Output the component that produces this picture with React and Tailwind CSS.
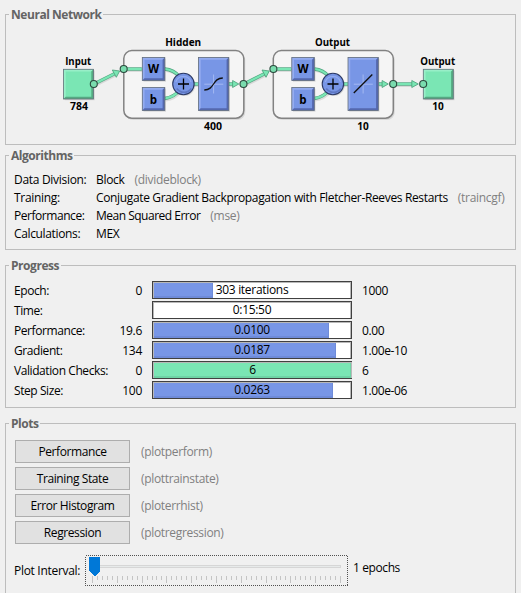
import React from 'react';

function Panel({ title, titleClass = '', className = '', children }) {
  return (
    <section className={`w-[511px] shrink-0 border border-[#bdbdbd] ${className}`}>
      <h2 className={`-mt-[9px] ml-[3px] h-[18px] whitespace-nowrap bg-[#f0f0f0] pl-[2px] text-[12px] font-bold leading-[18px] tracking-[-0.45px] text-[#646464] ${titleClass}`}>
        {title}
      </h2>
      {children}
    </section>
  );
}

function Bevel({ x, y, w, h, fill, light, dark }) {
  const b = 2.2;
  return (
    <g>
      <rect x={x + 1.2} y={y + 1.2} width={w} height={h} fill="#000" opacity="0.12" />
      <rect x={x} y={y} width={w} height={h} fill={fill} />
      <path d={`M${x} ${y}h${w}l${-b} ${b}h${2 * b - w}v${h - 2 * b}l${-b} ${b}z`} fill={light} />
      <path d={`M${x + w} ${y + h}h${-w}l${b} ${-b}h${w - 2 * b}v${2 * b - h}l${b} ${-b}z`} fill={dark} />
      <rect x={x} y={y} width={w} height={h} fill="none" stroke="#66707c" strokeWidth="0.8" />
    </g>
  );
}

const GREEN = { fill: '#7ae6b4', light: '#98efc8', dark: '#55a982' };
const BLUE = { fill: '#7896e6', light: '#94acf0', dark: '#5468ae' };

function Label({ x, y, w, children }) {
  return (
    <text x={x - w / 2} y={y} textLength={w} lengthAdjust="spacingAndGlyphs" fontSize="11" fontWeight="700" fill="#000">
      {children}
    </text>
  );
}

function Link({ d }) {
  return (
    <g fill="none">
      <path d={d} stroke="#000" strokeOpacity="0.1" strokeWidth="3" transform="translate(1 1.5)" />
      <path d={d} stroke="#4fa37e" strokeWidth="3.4" />
      <path d={d} stroke="#7ae6b4" strokeWidth="2.2" />
    </g>
  );
}

function Dot({ x, y }) {
  return <circle cx={x} cy={y} r="3.5" fill="#7adcae" stroke="#2c4a3e" strokeWidth="1.1" />;
}

function Head({ points }) {
  return <polygon points={points} fill="#7ae6b4" stroke="#4a9c77" strokeWidth="0.8" />;
}

function Layer({ x, curve }) {
  return (
    <g transform={`translate(${x} 0)`}>
      <rect x="1.5" y="52" width="120" height="68" rx="8" fill="#000" opacity="0.1" />
      <rect x="0" y="50.6" width="120" height="67.6" rx="8" fill="#f5f5f5" stroke="#828282" strokeWidth="1.5" />
      <Link d="M0 69H18" />
      <Link d="M41 69C48 69.5 52 72 56 77" />
      <Link d="M41 98.5C48 97.5 52 95 56 90" />
      <Link d="M68 84H76" />
      <Link d="M105 84H110" />
      <Bevel x={18.5} y={57.5} w={22.5} h={23} {...BLUE} />
      <Bevel x={18.5} y={87.5} w={22.5} h={23} {...BLUE} />
      <text x="29.7" y="73.3" textAnchor="middle" fontSize="11.5" fontWeight="700">W</text>
      <text x="29.7" y="103.5" textAnchor="middle" fontSize="11.5" fontWeight="700">b</text>
      <circle cx="60.6" cy="85" r="11" fill="#000" opacity="0.12" />
      <circle cx="59.6" cy="84" r="10.7" fill="#7896e6" stroke="#2d3a66" strokeWidth="1.1" />
      <path d="M52 82a8 8 0 0 1 15.2 0" fill="none" stroke="#94acf0" strokeWidth="1.2" />
      <path d="M53 88.5a8.8 8.8 0 0 0 14.5 0" fill="none" stroke="#5f78c4" strokeWidth="1.6" />
      <path d="M54.2 84H65.2M59.7 78.5V89.5" stroke="#000" strokeWidth="1.3" />
      <Bevel x={74.7} y={57.5} w={30.3} h={53} {...BLUE} />
      <path d="M80.5 84.2H99.5M89.8 74.5V93.5" stroke="#a9bcf3" strokeWidth="0.9" />
      <path d={curve} fill="none" stroke="#101010" strokeWidth="1.3" />
      <Head points="108.8,80.5 108.8,87.5 115,84" />
    </g>
  );
}

function Diagram() {
  return (
    <svg className="-mt-[9px] -ml-[5px] block h-[125px] w-[515px] font-['Open_Sans','Noto_Sans',sans-serif] tracking-normal" viewBox="1 15 515 125">
      <Layer x={123.8} curve="M80.5 90C91 90 88.5 78 99 78" />
      <Layer x={273.3} curve="M80.5 93L99 74.5" />
      <Link d="M94 84L115 73.5" />
      <Link d="M244 84L265 73.5" />
      <Link d="M393 84H412" />
      <Head points="112.3,70 119.7,71 116.3,77.3" />
      <Head points="262,70 269.3,71 266,77.3" />
      <Head points="411.8,80.5 411.8,87.5 418.3,84" />
      <Bevel x={63.5} y={69.3} w={30} h={29.7} {...GREEN} />
      <Bevel x={423.3} y={69.3} w={30} h={29.7} {...GREEN} />
      <Dot x={93.8} y={84} />
      <Dot x={123.7} y={69} />
      <Dot x={243.5} y={84} />
      <Dot x={273.4} y={69} />
      <Dot x={393.2} y={84} />
      <Dot x={423.2} y={84} />
      <Label x={78.2} y={65} w={26}>Input</Label>
      <Label x={79} y={110.3} w={18}>784</Label>
      <Label x={183.2} y={45.5} w={36}>Hidden</Label>
      <Label x={213} y={130.3} w={18}>400</Label>
      <Label x={332.5} y={45.5} w={35}>Output</Label>
      <Label x={363} y={130.3} w={11.5}>10</Label>
      <Label x={437.7} y={65} w={35}>Output</Label>
      <Label x={438} y={110.3} w={11.5}>10</Label>
    </svg>
  );
}

const algorithms = [
  ['Data Division:', 'Block', '(divideblock)', 'tracking-[-0.3px]', ''],
  ['Training:', 'Conjugate Gradient Backpropagation with Fletcher-Reeves Restarts', '(traincgf)', 'tracking-[-0.3px]', 'tracking-[-0.35px]'],
  ['Performance:', 'Mean Squared Error', '(mse)', 'tracking-[-0.45px]', 'tracking-[-0.5px]'],
  ['Calculations:', 'MEX', '', 'tracking-[-0.35px]', ''],
];

const progress = [
  ['Epoch:', '0', '303 iterations', '1000', 'w-[59px]'],
  ['Time:', '', '0:15:50', '', 'w-0'],
  ['Performance:', '19.6', '0.0100', '0.00', 'w-[175px]'],
  ['Gradient:', '134', '0.0187', '1.00e-10', 'w-[182px]'],
  ['Validation Checks:', '0', '6', '6', 'w-[197px]'],
  ['Step Size:', '100', '0.0263', '1.00e-06', 'w-[179px]'],
];

function Bar({ text, fill, green }) {
  return (
    <div className="grid h-[18px] w-[200px] shrink-0 border border-[#404040] bg-white">
      <div className="col-start-1 row-start-1 flex h-4 border-t border-l border-r border-[#b8b8b8]">
        <div className={`${fill} ${fill === 'w-0' ? '' : 'border-r border-b-2'} ${green ? 'border-[#6fd3a5] bg-[#7ae6b4]' : 'border-[#6f8bd8] bg-[#7896e6]'}`} />
      </div>
      <div className="col-start-1 row-start-1 h-4 text-center leading-[16px]">{text}</div>
    </div>
  );
}

const plots = [
  ['Performance', '(plotperform)'],
  ['Training State', '(plottrainstate)'],
  ['Error Histogram', '(ploterrhist)'],
  ['Regression', '(plotregression)'],
];

function Slider() {
  const ticks = Array.from({ length: 51 }, (_, i) => i);
  return (
    <svg className="block h-[31px] w-[263px] shrink-0" viewBox="85 555 263 31" shapeRendering="crispEdges">
      <rect x="85.5" y="555.5" width="262" height="30" fill="none" stroke="#505050" strokeDasharray="1 1" />
      <rect x="89.5" y="565.5" width="251" height="2" fill="#e7eaea" stroke="#d6d6d6" />
      {ticks.map((i) => (
        <rect key={i} x={Math.round(92 + i * 4.96)} y="576" width="1" height={i % 5 === 0 ? 7 : 4} fill="#c4c4c4" />
      ))}
      <path d="M89 557H100V571L95 576H94L89 571Z" fill="#0078d7" />
    </svg>
  );
}

export default function App() {
  return (
    <main className="flex h-[593px] w-[521px] flex-col overflow-hidden bg-[#f0f0f0] pt-[14px] pl-[5px] font-['Open_Sans','Noto_Sans',sans-serif] text-[12px] tracking-[-0.3px] text-black">
      <Panel title="Neural Network" titleClass="w-[94px]" className="h-[131px]">
        <Diagram />
      </Panel>

      <Panel title="Algorithms" titleClass="w-[65px]" className="mt-[10px] h-[95px]">
        <div className="mt-[6px] pl-[8px]">
          {algorithms.map(([name, value, fn, nameClass, valueClass]) => (
            <div key={name} className="flex h-[18px] whitespace-nowrap leading-[18px]">
              <span className={`w-[82px] ${nameClass}`}>{name}</span>
              <span className={valueClass}>{value}</span>
              <span className="ml-[10px] text-[#808080]">{fn}</span>
            </div>
          ))}
        </div>
      </Panel>

      <Panel title="Progress" titleClass="w-[52px]" className="mt-[15px] h-[143px]">
        <div className="mt-[6px] flex flex-col gap-[2px] pl-[8px]">
          {progress.map(([name, from, text, to, fill]) => (
            <div key={name} className="flex h-[18px] whitespace-nowrap leading-[20px]">
              <span className="w-[100px] tracking-[-0.42px]">{name}</span>
              <span className="w-[28px] text-right">{from}</span>
              <span className="w-[10px]" />
              <Bar text={text} fill={fill} green={name === 'Validation Checks:'} />
              <span className="ml-[10px] tracking-[-0.4px]">{to}</span>
            </div>
          ))}
        </div>
      </Panel>

      <Panel title="Plots" titleClass="w-[31px]" className="mt-[15px] h-[190px]">
        <div className="mt-[7px] flex flex-col gap-1 pl-[9px]">
          {plots.map(([name, fn]) => (
            <div key={name} className="flex h-[23px] whitespace-nowrap leading-[24px]">
              <button className="h-[23px] w-[115px] border border-[#adadad] bg-[#e1e1e1] leading-[21px] tracking-[-0.4px]">{name}</button>
              <span className="ml-[11px] tracking-[-0.33px] text-[#808080]">{fn}</span>
            </div>
          ))}
        </div>
        <div className="mt-[11px] flex whitespace-nowrap pl-[8px] leading-[31px]">
          <span className="w-[71px]">Plot Interval:</span>
          <Slider />
          <span className="-mt-[3px] ml-[5px] tracking-[-0.4px]">1 epochs</span>
        </div>
      </Panel>
    </main>
  );
}
